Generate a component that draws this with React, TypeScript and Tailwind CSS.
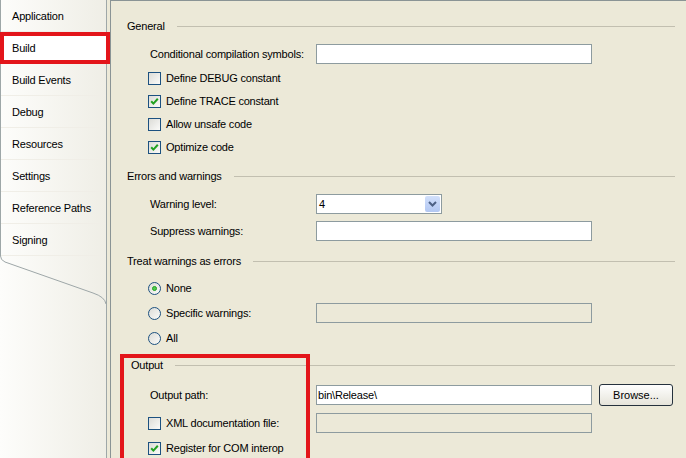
import React from "react";

const tabs = [
  "Application",
  "Build",
  "Build Events",
  "Debug",
  "Resources",
  "Settings",
  "Reference Paths",
  "Signing",
];

const CheckBox = ({ checked = false }: { checked?: boolean }) => (
  <span className="relative inline-block w-[13px] h-[13px] shrink-0 border border-[#1c5180] bg-gradient-to-br from-[#dcdcd7] to-[#fbfbf9]">
    {checked && (
      <svg width="11" height="11" viewBox="0 0 11 11" className="absolute left-0 top-0">
        <path d="M2.2 5.2 L4.4 7.6 L8.8 2.8" stroke="#21a121" strokeWidth="2" fill="none" />
      </svg>
    )}
  </span>
);

const Radio = ({ checked = false }: { checked?: boolean }) => (
  <span className="relative flex items-center justify-center w-[13px] h-[13px] shrink-0 rounded-full border border-[#1c5180] bg-gradient-to-br from-[#dcdcd7] to-[#fbfbf9]">
    {checked && <span className="w-[5px] h-[5px] rounded-full bg-[#4fc94f] border border-[#21a121]" />}
  </span>
);

const TextBox = ({ value = "", disabled = false }: { value?: string; disabled?: boolean }) => (
  <div
    className={`w-[276px] h-[20px] border border-[#8d9b9f] flex items-center pl-[1px] ${
      disabled ? "bg-[#ece9d8]" : "bg-white"
    }`}
  >
    {value}
  </div>
);

const Header = ({ title, indent = "pl-[16px]", className = "" }: { title: string; indent?: string; className?: string }) => (
  <div className={`h-[20px] flex items-center pr-[11px] ${indent} ${className}`}>
    <span>{title}</span>
    <div className="flex-1 h-px bg-[#c2bfb0] ml-3" />
  </div>
);

const LabelRow = ({ label, className = "", children }: { label: string; className?: string; children?: React.ReactNode }) => (
  <div className={`h-[20px] flex items-center pl-[39px] ${className}`}>
    <span className="w-[166px] shrink-0">{label}</span>
    {children}
  </div>
);

const CheckRow = ({ label, checked, className = "", children }: { label: string; checked?: boolean; className?: string; children?: React.ReactNode }) => (
  <div className={`h-[20px] flex items-center pl-[37px] ${className}`}>
    <div className={`flex items-center gap-[5px] ${children ? "w-[168px] shrink-0" : ""}`}>
      <CheckBox checked={checked} />
      <span>{label}</span>
    </div>
    {children}
  </div>
);

const RadioRow = ({ label, checked, className = "", children }: { label: string; checked?: boolean; className?: string; children?: React.ReactNode }) => (
  <div className={`h-[20px] flex items-center pl-[37px] ${className}`}>
    <div className={`flex items-center gap-[5px] ${children ? "w-[168px] shrink-0" : ""}`}>
      <Radio checked={checked} />
      <span>{label}</span>
    </div>
    {children}
  </div>
);

export default function App() {
  return (
    <div className="w-[686px] h-[458px] flex overflow-hidden bg-[#ece9d8] text-black text-[11px] tracking-[-0.2px] font-['Liberation_Sans',Arial,sans-serif]">
      {/* tab strip */}
      <div className="relative w-[110px] h-full shrink-0 bg-[#ece9d8]">
        <div className="relative w-[107px] h-full border-r border-[#9ea7a8] bg-gradient-to-r from-[#fdfdfb] to-[#efeee6]">
          <div className="border-l border-[#9ea7a8]">
            {tabs.map((t) => (
              <div
                key={t}
                className={`h-[32px] flex items-center pl-[11px] pt-[2px] border-b border-[#f0eee7] ${
                  t === "Build" ? "bg-white" : ""
                }`}
              >
                {t}
              </div>
            ))}
          </div>
          <svg width="107" height="60" className="absolute left-0 top-[251px]">
            <path
              d="M0.5 0 V5 Q0.5 9 5 11 L93 42 Q105 46 106 53"
              stroke="#9ea7a8"
              strokeWidth="1"
              fill="none"
            />
          </svg>
        </div>
        <div className="absolute left-0 top-[32px] w-[110px] h-[32px] border-4 border-[#e3151a]" />
      </div>

      {/* property page */}
      <div className="relative flex-1 h-full border-l border-t border-[#8a9495] pt-[15px]">
        <Header title="General" />
        <LabelRow label="Conditional compilation symbols:" className="mt-[8px]">
          <TextBox />
        </LabelRow>
        <CheckRow label="Define DEBUG constant" className="mt-[4px]" />
        <CheckRow label="Define TRACE constant" checked className="mt-[3px]" />
        <CheckRow label="Allow unsafe code" className="mt-[3px]" />
        <CheckRow label="Optimize code" checked className="mt-[3px]" />

        <Header title="Errors and warnings" className="mt-[9px]" />
        <LabelRow label="Warning level:" className="mt-[8px]">
          <div className="w-[126px] h-[20px] border border-[#8d9b9f] bg-white flex items-center">
            <span className="flex-1 pl-[2px]">4</span>
            <div className="w-[15px] h-[16px] mr-[1px] rounded-[2px] bg-gradient-to-b from-[#d2e0fb] to-[#b2c7f2] flex items-center justify-center">
              <svg width="9" height="6" viewBox="0 0 9 6">
                <path d="M1 1 L4.5 4.5 L8 1" stroke="#4d6185" strokeWidth="2" fill="none" />
              </svg>
            </div>
          </div>
        </LabelRow>
        <LabelRow label="Suppress warnings:" className="mt-[7px]">
          <TextBox />
        </LabelRow>

        <Header title="Treat warnings as errors" className="mt-[10px]" />
        <RadioRow label="None" checked className="mt-[7px]" />
        <RadioRow label="Specific warnings:" className="mt-[5px]">
          <TextBox disabled />
        </RadioRow>
        <RadioRow label="All" className="mt-[5px]" />

        <Header title="Output" indent="pl-[20px]" className="mt-[7px]" />
        <LabelRow label="Output path:" className="mt-[10px]">
          <TextBox value={"bin\\Release\\"} />
          <button className="ml-[7px] w-[74px] h-[22px] rounded-[3px] border border-[#25313d] bg-gradient-to-b from-[#fefefe] to-[#e6e4da] tracking-normal">
            Browse...
          </button>
        </LabelRow>
        <CheckRow label="XML documentation file:" className="mt-[8px]">
          <TextBox disabled />
        </CheckRow>
        <CheckRow label="Register for COM interop" checked className="mt-[5px]" />

        <div className="absolute left-[9px] top-[353px] w-[190px] h-[110px] border-4 border-[#e3151a]" />
      </div>
    </div>
  );
}
